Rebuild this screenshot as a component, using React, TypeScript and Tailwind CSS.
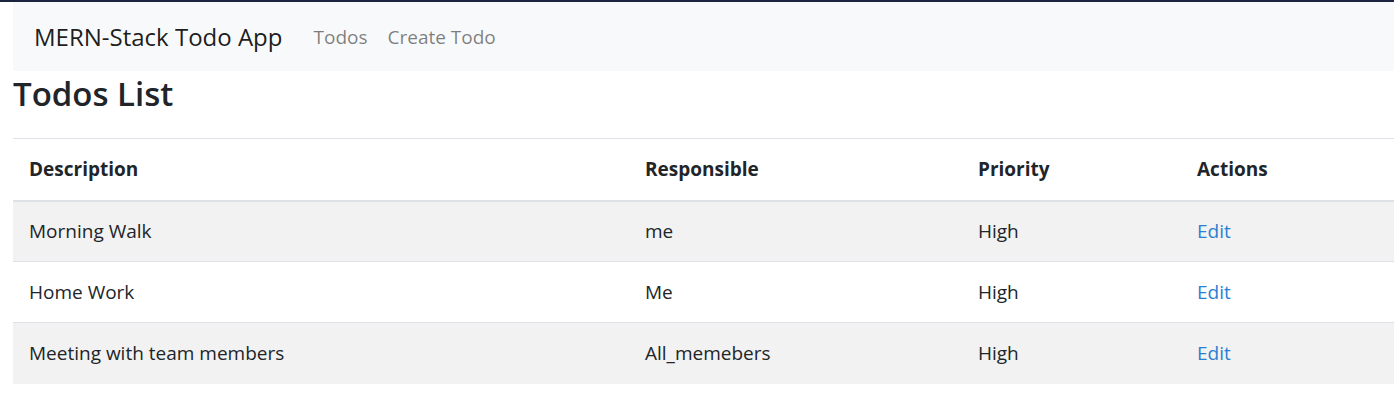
export default function App() {
  const rows = [
    { d: "Morning Walk", r: "me", p: "High" },
    { d: "Home Work", r: "Me", p: "High" },
    { d: "Meeting with team members", r: "All_memebers", p: "High" },
  ];
  return (
    <div className="w-[1394px] h-[414px] overflow-hidden bg-white text-[#212529] text-[19px] leading-[30px]" style={{ fontFamily: '"Open Sans", "Noto Sans", sans-serif' }}>
      <div className="h-[2px] bg-[#1b2540]" />
      <div className="pl-[13px]">
        <nav className="flex items-center h-[69px] bg-[#f8f9fa] px-[21px]">
          <span className="text-[24px] leading-[37px] text-[rgba(0,0,0,0.9)] mr-[21px]">MERN-Stack Todo App</span>
          <span className="px-[10px] text-[rgba(0,0,0,0.5)]">Todos</span>
          <span className="px-[10px] text-[rgba(0,0,0,0.5)]">Create Todo</span>
        </nav>
        <h3 className="text-[33px] leading-[42px] font-semibold mt-[2px] mb-[23px]">Todos List</h3>
        <table className="w-[1400px] border-collapse border-t border-[#dee2e6]">
          <thead>
            <tr className="h-[62px]">
              <th className="w-[616px] text-left font-bold px-[16px] border-b-[2px] border-[#dee2e6]">Description</th>
              <th className="w-[333px] text-left font-bold px-[16px] border-b-[2px] border-[#dee2e6]">Responsible</th>
              <th className="w-[219px] text-left font-bold px-[16px] border-b-[2px] border-[#dee2e6]">Priority</th>
              <th className="text-left font-bold px-[16px] border-b-[2px] border-[#dee2e6]">Actions</th>
            </tr>
          </thead>
          <tbody>
            {rows.map((row, i) => (
              <tr key={i} className={`h-[61px] ${i % 2 === 0 ? "bg-[#f2f2f2]" : "bg-white"} ${i > 0 ? "border-t border-[#dee2e6]" : ""}`}>
                <td className="px-[16px]">{row.d}</td>
                <td className="px-[16px]">{row.r}</td>
                <td className="px-[16px]">{row.p}</td>
                <td className="px-[16px] text-[#2a7fd4]">Edit</td>
              </tr>
            ))}
          </tbody>
        </table>
      </div>
    </div>
  );
}
